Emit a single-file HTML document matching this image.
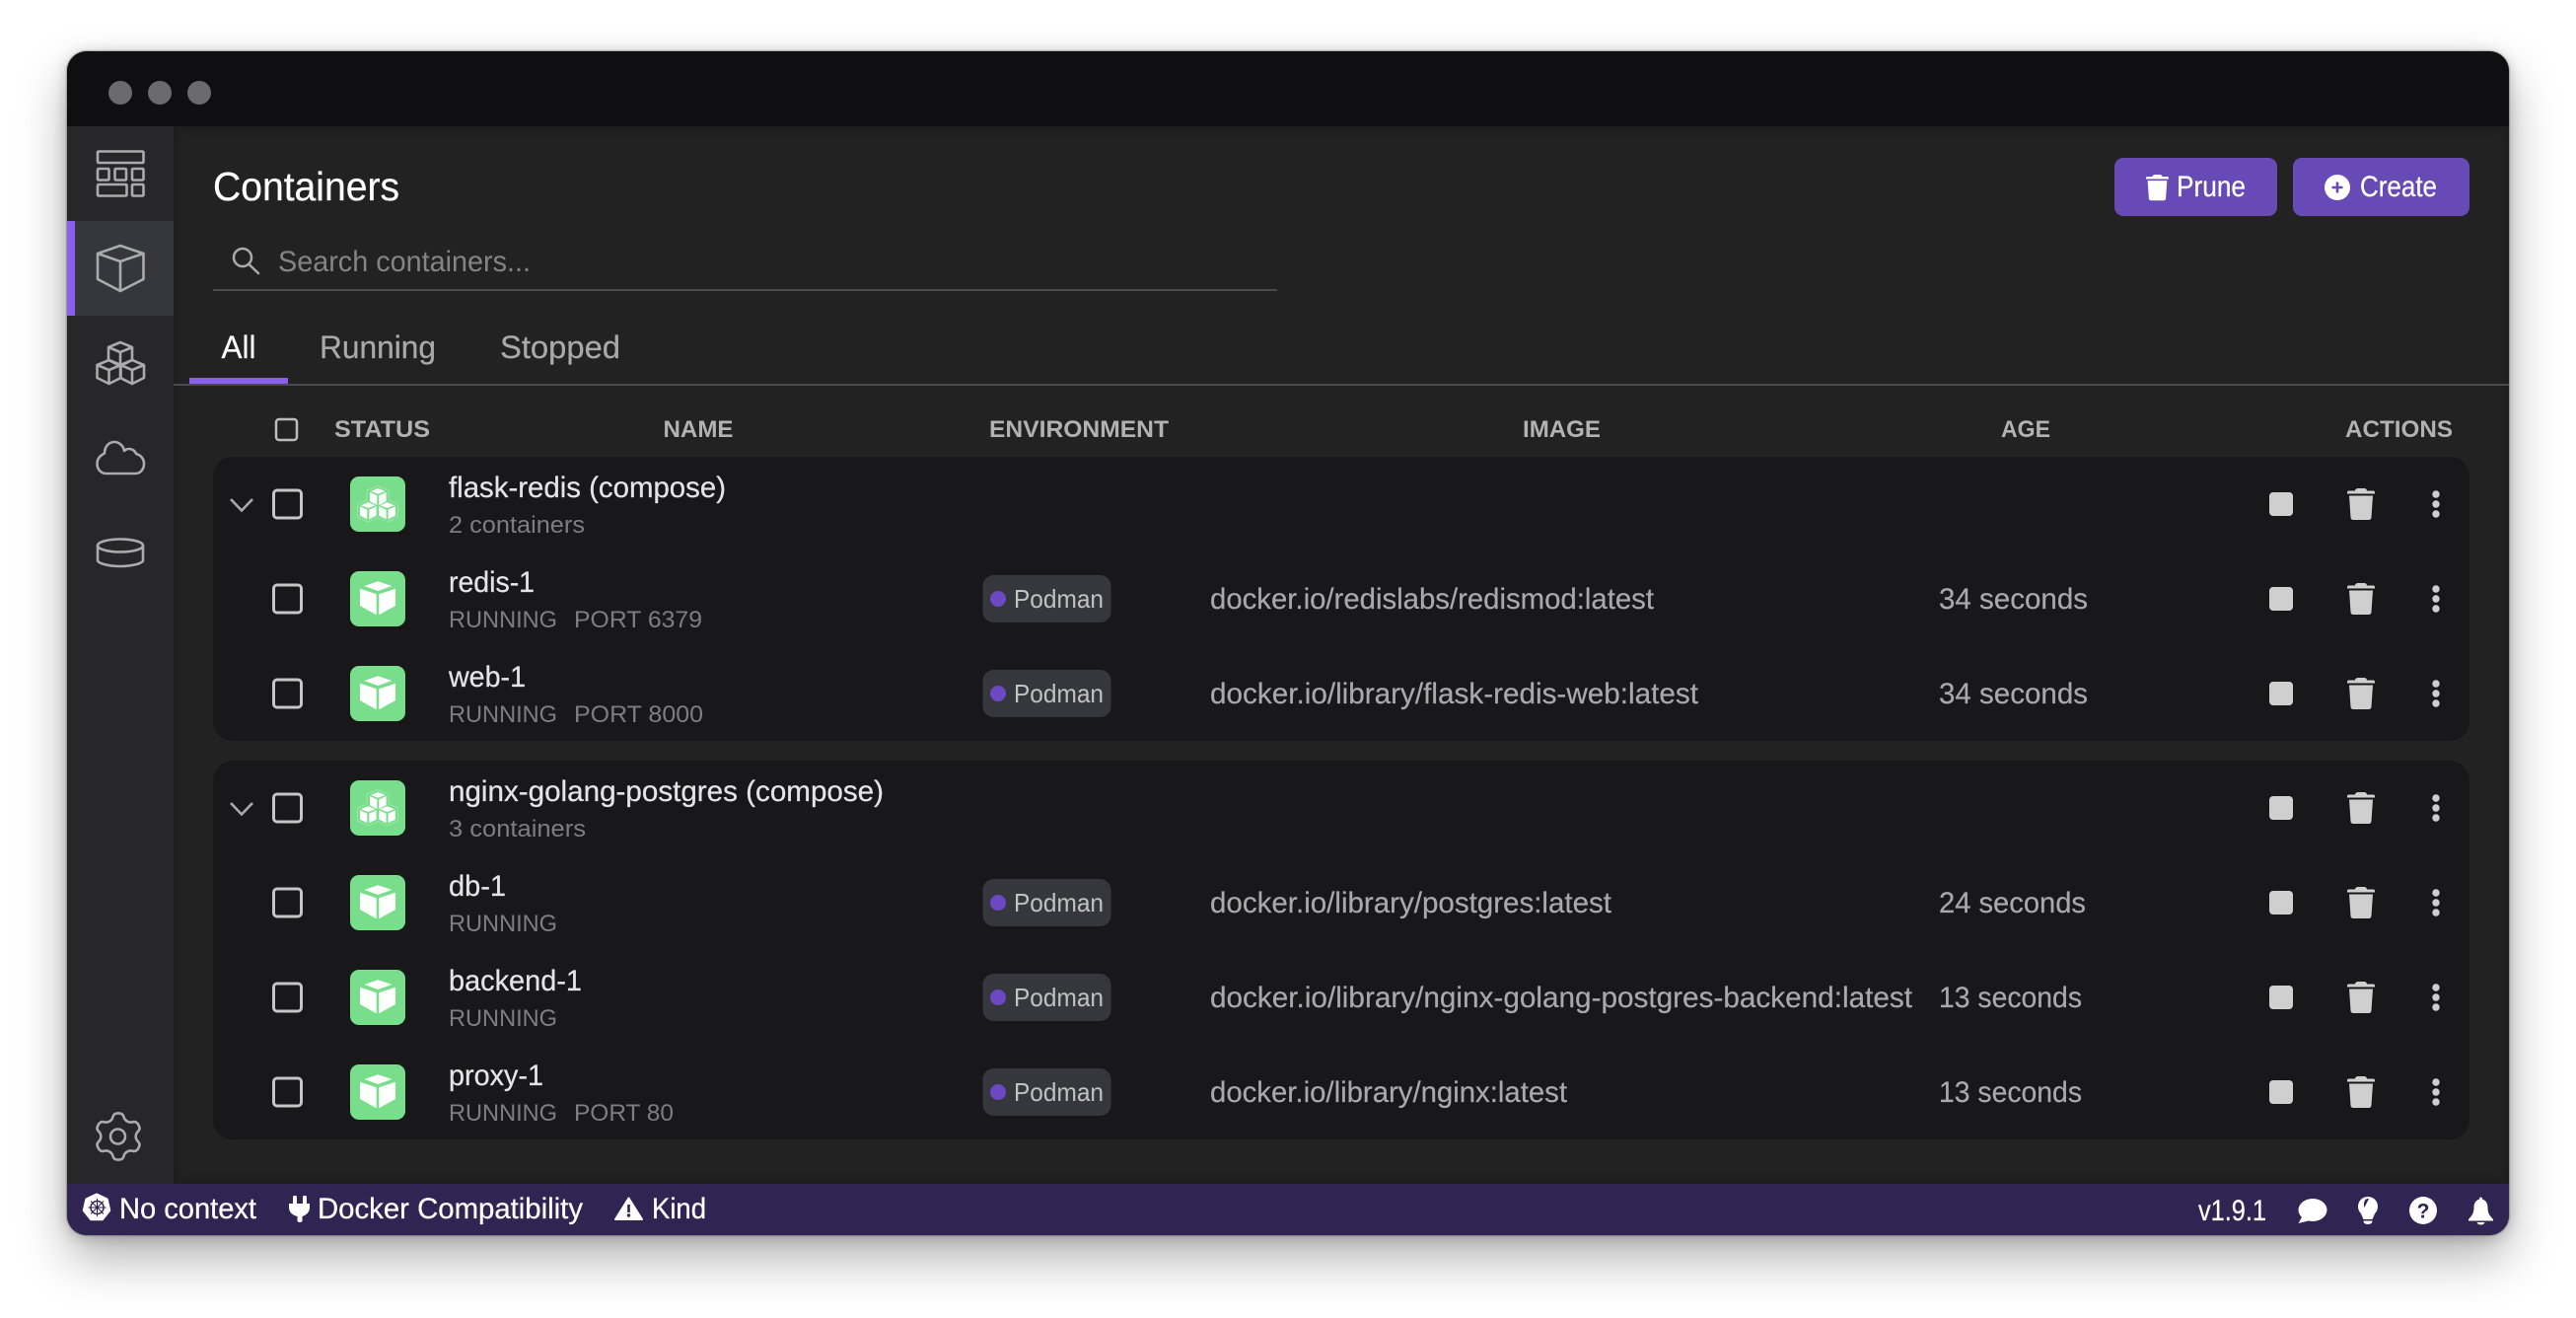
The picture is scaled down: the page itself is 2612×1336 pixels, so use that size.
<!DOCTYPE html>
<html><head><meta charset="utf-8"><title>Containers</title>
<style>
html,body{margin:0;padding:0;background:#fff;width:2612px;height:1336px;overflow:hidden}
#win{position:absolute;left:68px;top:52px;width:2476px;height:1200px;border-radius:20px;background:#222;box-shadow:0 24px 50px rgba(0,0,0,.3),0 2px 14px rgba(0,0,0,.22),0 0 1px 1px rgba(0,0,0,.25)}
#main{position:absolute;left:176px;top:128px;width:2368px;height:1072px;background:#222;box-shadow:inset 0 0 14px rgba(0,0,0,.22)}
svg{position:absolute;left:0;top:0}
text{font-family:"Liberation Sans",sans-serif;font-size:29.5px}
.h{font-weight:700;font-size:24px;fill:#b2b2b2}
.n{fill:#e4e4e4;stroke:#e4e4e4;stroke-width:.25}
.s{font-size:24px;fill:#7e7e7e}
.i{fill:#a9a9a9;stroke:#a9a9a9;stroke-width:.2}
.p{font-size:26px;fill:#c2c2c2}
.w{fill:#fff;stroke:#fff;stroke-width:.25}
.t{font-size:32.5px;fill:#a9a9a9;stroke:#a9a9a9;stroke-width:.25}
.ol{fill:none;stroke:#ababab;stroke-width:2.6;stroke-linejoin:round;stroke-linecap:round}
</style></head>
<body>
<div id="win"></div>
<div id="main"></div>
<svg width="2612" height="1336" viewBox="0 0 2612 1336" xmlns="http://www.w3.org/2000/svg">
<defs>
<g id="chk"><rect x="-14" y="-14" width="28" height="28" rx="3.5" fill="none" stroke="#c6c6c6" stroke-width="3"/></g>
<g id="trash"><path d="M8 2.5C8 1 9.5 0 11 0H17C18.5 0 20 1 20 2.5H26.5C27.3 2.5 28 3.3 28 4.2V5.5H0V4.2C0 3.3.7 2.5 1.5 2.5Z"/><path d="M2 7.5H26L24.5 29.5C24.4 31 23 32 21.7 32H6.3C5 32 3.6 31 3.5 29.5Z"/></g>
<g id="act" fill="#cfcfcf"><rect x="2301" y="-12" width="24" height="24" rx="4"/><use href="#trash" x="2380" y="-16"/><circle cx="2470" cy="-10" r="3.7"/><circle cx="2470" cy="0" r="3.7"/><circle cx="2470" cy="10" r="3.7"/></g>
<g id="tile1"><rect width="56" height="56" rx="9" fill="#79de8b"/><g fill="#fff"><polygon points="28.3,10.3 42.3,15 28.3,20 14.3,15"/><polygon points="10,17.7 26.7,23.3 26.7,44.3 10,35"/><polygon points="46,17.7 29.3,23.3 29.3,44.3 46,35"/></g></g>
<g id="sc"><polygon points="8.3,0 15.6,3 8.3,5.7 1,3"/><polygon points="0,4 7.3,7.3 7.3,17 0,13.3"/><polygon points="16.6,4 9.3,7.3 9.3,17 16.6,13.3"/></g>
<g id="tile3"><rect width="56" height="56" rx="9" fill="#79de8b"/><g fill="#fff"><use href="#sc" x="20" y="12"/><use href="#sc" x="10" y="26.3"/><use href="#sc" x="29.3" y="26.3"/></g><path d="M28 9.5L39 14V24L48.500 28V41L38 46L28 41.500L18 46L7.500 41V28L17 24V14Z" fill="none" stroke="#fff" stroke-opacity=".25" stroke-width="1"/></g>
<g id="oc"><path d="M12 0L24 5V18L12 24L0 18V5ZM0 5L12 10L24 5M12 10V24"/></g>
<g id="badge"><rect x="996.500" y="-24" width="130" height="48" rx="11" fill="#36363d"/><circle cx="1012" cy="0" r="8" fill="#6c49c3"/><text class="p" x="1028" y="9" textLength="91" lengthAdjust="spacingAndGlyphs">Podman</text></g>
</defs>

<!-- window chrome -->
<path d="M68 128V72A20 20 0 0 1 88 52H2524A20 20 0 0 1 2544 72V128Z" fill="#0f0f11"/>
<circle cx="122" cy="94" r="12" fill="#6b6b6d"/><circle cx="162" cy="94" r="12" fill="#6b6b6d"/><circle cx="202" cy="94" r="12" fill="#6b6b6d"/>

<!-- sidebar -->
<rect x="68" y="128" width="108" height="1072" fill="#27272a"/>
<rect x="68" y="224" width="108" height="96" fill="#36363d"/>
<rect x="68" y="224" width="8" height="96" fill="#8b5fe9"/>
<g class="ol">
<rect x="99" y="153.500" width="46.500" height="11.500" rx="1"/>
<rect x="99" y="171" width="11.500" height="11.500" rx="1"/><rect x="116.500" y="171" width="11.500" height="11.500" rx="1"/><rect x="134" y="171" width="11.500" height="11.500" rx="1"/>
<rect x="99" y="187" width="29.500" height="11.500" rx="1"/><rect x="134" y="187" width="11.500" height="11.500" rx="1"/>
<path d="M122 249L145.500 257V283L122 295L99 283V257ZM99 257L122 265L145.500 257M122 265V295"/>
<use href="#oc" x="110" y="347"/><use href="#oc" x="98.500" y="365"/><use href="#oc" x="122" y="365"/>
<path d="M108 480H137C142.500 480 146 475.500 146 470C146 465 142.500 461 138 460C137 457 134 455 131 455C129 455 127 456 126 457C125 451 120 448 116 448C110 448 106 453 106 459.500C101 462 98.500 466 98.500 470C98.500 476 102.500 480 108 480Z"/>
<ellipse cx="122" cy="553" rx="23" ry="6.500"/>
<path d="M99 553V568C99 571 110 574 122 574C134 574 145 571 145 568V553"/>
<path d="M120 1128.4Q124.6 1128.4 125.4 1131.75Q126.2 1135.1 128.9 1136.65Q131.6 1138.2 134.85 1137.25Q138.1 1136.3 140.4 1140.25Q142.7 1144.2 140.2 1146.55Q137.7 1148.9 137.7 1152Q137.7 1155.1 140.2 1157.45Q142.7 1159.8 140.4 1163.75Q138.1 1167.7 134.85 1166.75Q131.6 1165.8 128.9 1167.35Q126.2 1168.9 125.4 1172.25Q124.6 1175.6 120 1175.6Q115.4 1175.6 114.6 1172.25Q113.8 1168.9 111.1 1167.35Q108.4 1165.8 105.15 1166.75Q101.9 1167.7 99.6 1163.75Q97.3 1159.8 99.8 1157.45Q102.3 1155.1 102.3 1152Q102.3 1148.9 99.8 1146.55Q97.3 1144.2 99.6 1140.25Q101.9 1136.3 105.15 1137.25Q108.4 1138.2 111.1 1136.65Q113.8 1135.1 114.6 1131.75Q115.4 1128.4 120 1128.4Z"/>
<circle cx="119.500" cy="1152" r="7.500"/>
</g>

<!-- header -->
<text class="w" x="216" y="203" style="font-size:41px" textLength="189" lengthAdjust="spacingAndGlyphs">Containers</text>
<circle cx="246" cy="261" r="9" fill="none" stroke="#ababab" stroke-width="2.500"/><path d="M252.500 268L262 277" stroke="#ababab" stroke-width="2.500" stroke-linecap="round"/>
<text x="282" y="275" fill="#848484" textLength="256" lengthAdjust="spacingAndGlyphs">Search containers...</text>
<rect x="216" y="293" width="1079" height="2" fill="#4a4a50"/>

<rect x="2144" y="160" width="165" height="59" rx="9" fill="#674ab6"/>
<use href="#trash" transform="translate(2176 177) scale(.82)" fill="#fff"/>
<text class="w" x="2207" y="199" textLength="70" lengthAdjust="spacingAndGlyphs">Prune</text>
<rect x="2325" y="160" width="179" height="59" rx="9" fill="#674ab6"/>
<circle cx="2370" cy="190" r="13" fill="#fff"/><path d="M2364.500 190H2375.500M2370 184.500V195.500" stroke="#674ab6" stroke-width="2.600"/>
<text class="w" x="2393" y="199" textLength="78" lengthAdjust="spacingAndGlyphs">Create</text>

<!-- tabs -->
<text class="w" x="224.500" y="363" style="font-size:32.500px" textLength="35" lengthAdjust="spacingAndGlyphs">All</text>
<text class="t" x="324" y="363" textLength="118" lengthAdjust="spacingAndGlyphs">Running</text>
<text class="t" x="507" y="363" textLength="122" lengthAdjust="spacingAndGlyphs">Stopped</text>
<rect x="176" y="389" width="2368" height="2" fill="#4a4a50"/>
<rect x="192" y="383" width="100" height="6" fill="#8b5fe9"/>

<!-- table header -->
<rect x="280" y="425" width="21" height="21" rx="3" fill="none" stroke="#bdbdbd" stroke-width="2.500"/>
<text class="h" x="339" y="443" textLength="97" lengthAdjust="spacingAndGlyphs">STATUS</text>
<text class="h" x="672.500" y="443" textLength="71" lengthAdjust="spacingAndGlyphs">NAME</text>
<text class="h" x="1003" y="443" textLength="182" lengthAdjust="spacingAndGlyphs">ENVIRONMENT</text>
<text class="h" x="1544" y="443" textLength="79" lengthAdjust="spacingAndGlyphs">IMAGE</text>
<text class="h" x="2029" y="443" textLength="50" lengthAdjust="spacingAndGlyphs">AGE</text>
<text class="h" x="2378" y="443" textLength="109" lengthAdjust="spacingAndGlyphs">ACTIONS</text>

<!-- groups -->
<rect x="216" y="463" width="2288" height="288" rx="20" fill="#18181b"/>
<rect x="216" y="771" width="2288" height="384" rx="20" fill="#18181b"/>

<!-- group 1 -->
<path d="M234 506L245 517.500L256 506" fill="none" stroke="#a9a9a9" stroke-width="2.600"/>
<use href="#chk" x="291.500" y="511"/><use href="#tile3" x="355" y="483"/>
<text class="n" x="455" y="504" textLength="281" lengthAdjust="spacingAndGlyphs">flask-redis (compose)</text>
<text class="s" x="455" y="540" textLength="138" lengthAdjust="spacingAndGlyphs">2 containers</text>
<use href="#act" y="511"/>

<use href="#chk" x="291.500" y="607"/><use href="#tile1" x="355" y="579"/>
<text class="n" x="455" y="600" textLength="87" lengthAdjust="spacingAndGlyphs">redis-1</text>
<text class="s" x="455" y="636" textLength="110" lengthAdjust="spacingAndGlyphs">RUNNING</text>
<text class="s" x="582" y="636" textLength="130" lengthAdjust="spacingAndGlyphs">PORT 6379</text>
<use href="#badge" y="607"/>
<text class="i" x="1227" y="617" textLength="450" lengthAdjust="spacingAndGlyphs">docker.io/redislabs/redismod:latest</text>
<text class="i" x="1966" y="617" textLength="151" lengthAdjust="spacingAndGlyphs">34 seconds</text>
<use href="#act" y="607"/>

<use href="#chk" x="291.500" y="703"/><use href="#tile1" x="355" y="675"/>
<text class="n" x="455" y="696" textLength="78" lengthAdjust="spacingAndGlyphs">web-1</text>
<text class="s" x="455" y="732" textLength="110" lengthAdjust="spacingAndGlyphs">RUNNING</text>
<text class="s" x="582" y="732" textLength="131" lengthAdjust="spacingAndGlyphs">PORT 8000</text>
<use href="#badge" y="703"/>
<text class="i" x="1227" y="713" textLength="495" lengthAdjust="spacingAndGlyphs">docker.io/library/flask-redis-web:latest</text>
<text class="i" x="1966" y="713" textLength="151" lengthAdjust="spacingAndGlyphs">34 seconds</text>
<use href="#act" y="703"/>

<!-- group 2 -->
<path d="M234 814L245 825.500L256 814" fill="none" stroke="#a9a9a9" stroke-width="2.600"/>
<use href="#chk" x="291.500" y="819"/><use href="#tile3" x="355" y="791"/>
<text class="n" x="455" y="812" textLength="441" lengthAdjust="spacingAndGlyphs">nginx-golang-postgres (compose)</text>
<text class="s" x="455" y="848" textLength="139" lengthAdjust="spacingAndGlyphs">3 containers</text>
<use href="#act" y="819"/>

<use href="#chk" x="291.500" y="915"/><use href="#tile1" x="355" y="887"/>
<text class="n" x="455" y="908" textLength="58" lengthAdjust="spacingAndGlyphs">db-1</text>
<text class="s" x="455" y="944" textLength="110" lengthAdjust="spacingAndGlyphs">RUNNING</text>
<use href="#badge" y="915"/>
<text class="i" x="1227" y="925" textLength="407" lengthAdjust="spacingAndGlyphs">docker.io/library/postgres:latest</text>
<text class="i" x="1966" y="925" textLength="149" lengthAdjust="spacingAndGlyphs">24 seconds</text>
<use href="#act" y="915"/>

<use href="#chk" x="291.500" y="1011"/><use href="#tile1" x="355" y="983"/>
<text class="n" x="455" y="1004" textLength="135" lengthAdjust="spacingAndGlyphs">backend-1</text>
<text class="s" x="455" y="1040" textLength="110" lengthAdjust="spacingAndGlyphs">RUNNING</text>
<use href="#badge" y="1011"/>
<text class="i" x="1227" y="1021" textLength="712" lengthAdjust="spacingAndGlyphs">docker.io/library/nginx-golang-postgres-backend:latest</text>
<text class="i" x="1966" y="1021" textLength="145" lengthAdjust="spacingAndGlyphs">13 seconds</text>
<use href="#act" y="1011"/>

<use href="#chk" x="291.500" y="1107"/><use href="#tile1" x="355" y="1079"/>
<text class="n" x="455" y="1100" textLength="96" lengthAdjust="spacingAndGlyphs">proxy-1</text>
<text class="s" x="455" y="1136" textLength="110" lengthAdjust="spacingAndGlyphs">RUNNING</text>
<text class="s" x="582" y="1136" textLength="101" lengthAdjust="spacingAndGlyphs">PORT 80</text>
<use href="#badge" y="1107"/>
<text class="i" x="1227" y="1117" textLength="362" lengthAdjust="spacingAndGlyphs">docker.io/library/nginx:latest</text>
<text class="i" x="1966" y="1117" textLength="145" lengthAdjust="spacingAndGlyphs">13 seconds</text>
<use href="#act" y="1107"/>

<!-- status bar -->
<path d="M68 1200H2544V1232A20 20 0 0 1 2524 1252H88A20 20 0 0 1 68 1232Z" fill="#2f2452"/>
<g>
<polygon points="98,1211.500 107.800,1216.200 110.200,1226.800 103.400,1235.300 92.600,1235.300 85.800,1226.800 88.200,1216.200" fill="#fff" stroke="#fff" stroke-width="4" stroke-linejoin="round"/>
<circle cx="98.500" cy="1224" r="6.500" fill="none" stroke="#2f2452" stroke-width="1.500"/>
<path d="M98.500 1215V1233M89.500 1224H107.500M92 1217.500L105 1230.500M105 1217.500L92 1230.500" stroke="#2f2452" stroke-width="1"/>
<circle cx="98.500" cy="1224" r="1.800" fill="#2f2452"/>
</g>
<text class="w" x="121" y="1235" textLength="139" lengthAdjust="spacingAndGlyphs">No context</text>
<g fill="#fff"><rect x="297" y="1212" width="4" height="10" rx="1.500"/><rect x="307" y="1212" width="4" height="10" rx="1.500"/>
<path d="M293 1220H314V1224C314 1229 310 1232 306.500 1233V1237.500C306.500 1238.500 305 1239 304 1239C303 1239 301.500 1238.500 301.500 1237.500V1233C297 1232 293 1229 293 1224Z"/></g>
<text class="w" x="322" y="1235" textLength="269" lengthAdjust="spacingAndGlyphs">Docker Compatibility</text>
<path d="M637.500 1214.500L651 1236H624Z" fill="#fff" stroke="#fff" stroke-width="2" stroke-linejoin="round"/>
<rect x="636.200" y="1221" width="2.600" height="8" fill="#2f2452"/><circle cx="637.500" cy="1232" r="1.700" fill="#2f2452"/>
<text class="w" x="661" y="1235" textLength="55" lengthAdjust="spacingAndGlyphs">Kind</text>

<text class="w" x="2229" y="1237" textLength="69" lengthAdjust="spacingAndGlyphs">v1.9.1</text>
<g fill="#fff">
<ellipse cx="2345" cy="1226.500" rx="14.500" ry="11.500"/><path d="M2335 1232L2330.500 1240L2343 1237Z"/>
<circle cx="2401" cy="1223" r="10"/><path d="M2393.500 1229H2408.500L2405.500 1236H2396.500Z"/><path d="M2396.500 1237.500H2405.500C2405.500 1240 2403.500 1241 2401 1241C2398.500 1241 2396.500 1240 2396.500 1237.500Z"/>
<circle cx="2457" cy="1227" r="14"/>
<path d="M2515.500 1213.500C2516.500 1213.500 2517 1214.500 2517 1215.500C2521 1217 2522.500 1220 2522.500 1224C2522.500 1229 2524 1232 2528 1236V1237.500H2503V1236C2507 1232 2508.500 1229 2508.500 1224C2508.500 1220 2510 1217 2514 1215.500C2514 1214.500 2514.500 1213.500 2515.500 1213.500Z"/>
<path d="M2511.500 1239H2519.500C2519 1240.500 2517.500 1241.500 2515.500 1241.500C2513.500 1241.500 2512 1240.500 2511.500 1239Z"/>
</g>
<path d="M2398 1216.500C2399 1215.300 2400.500 1214.800 2402 1215L2397.500 1224C2396.700 1222 2396.800 1218.500 2398 1216.500Z" fill="#2f2452"/>
<text x="2457" y="1234.500" text-anchor="middle" style="font-size:21px;font-weight:700" fill="#2f2452">?</text>
</svg>
</body></html>
